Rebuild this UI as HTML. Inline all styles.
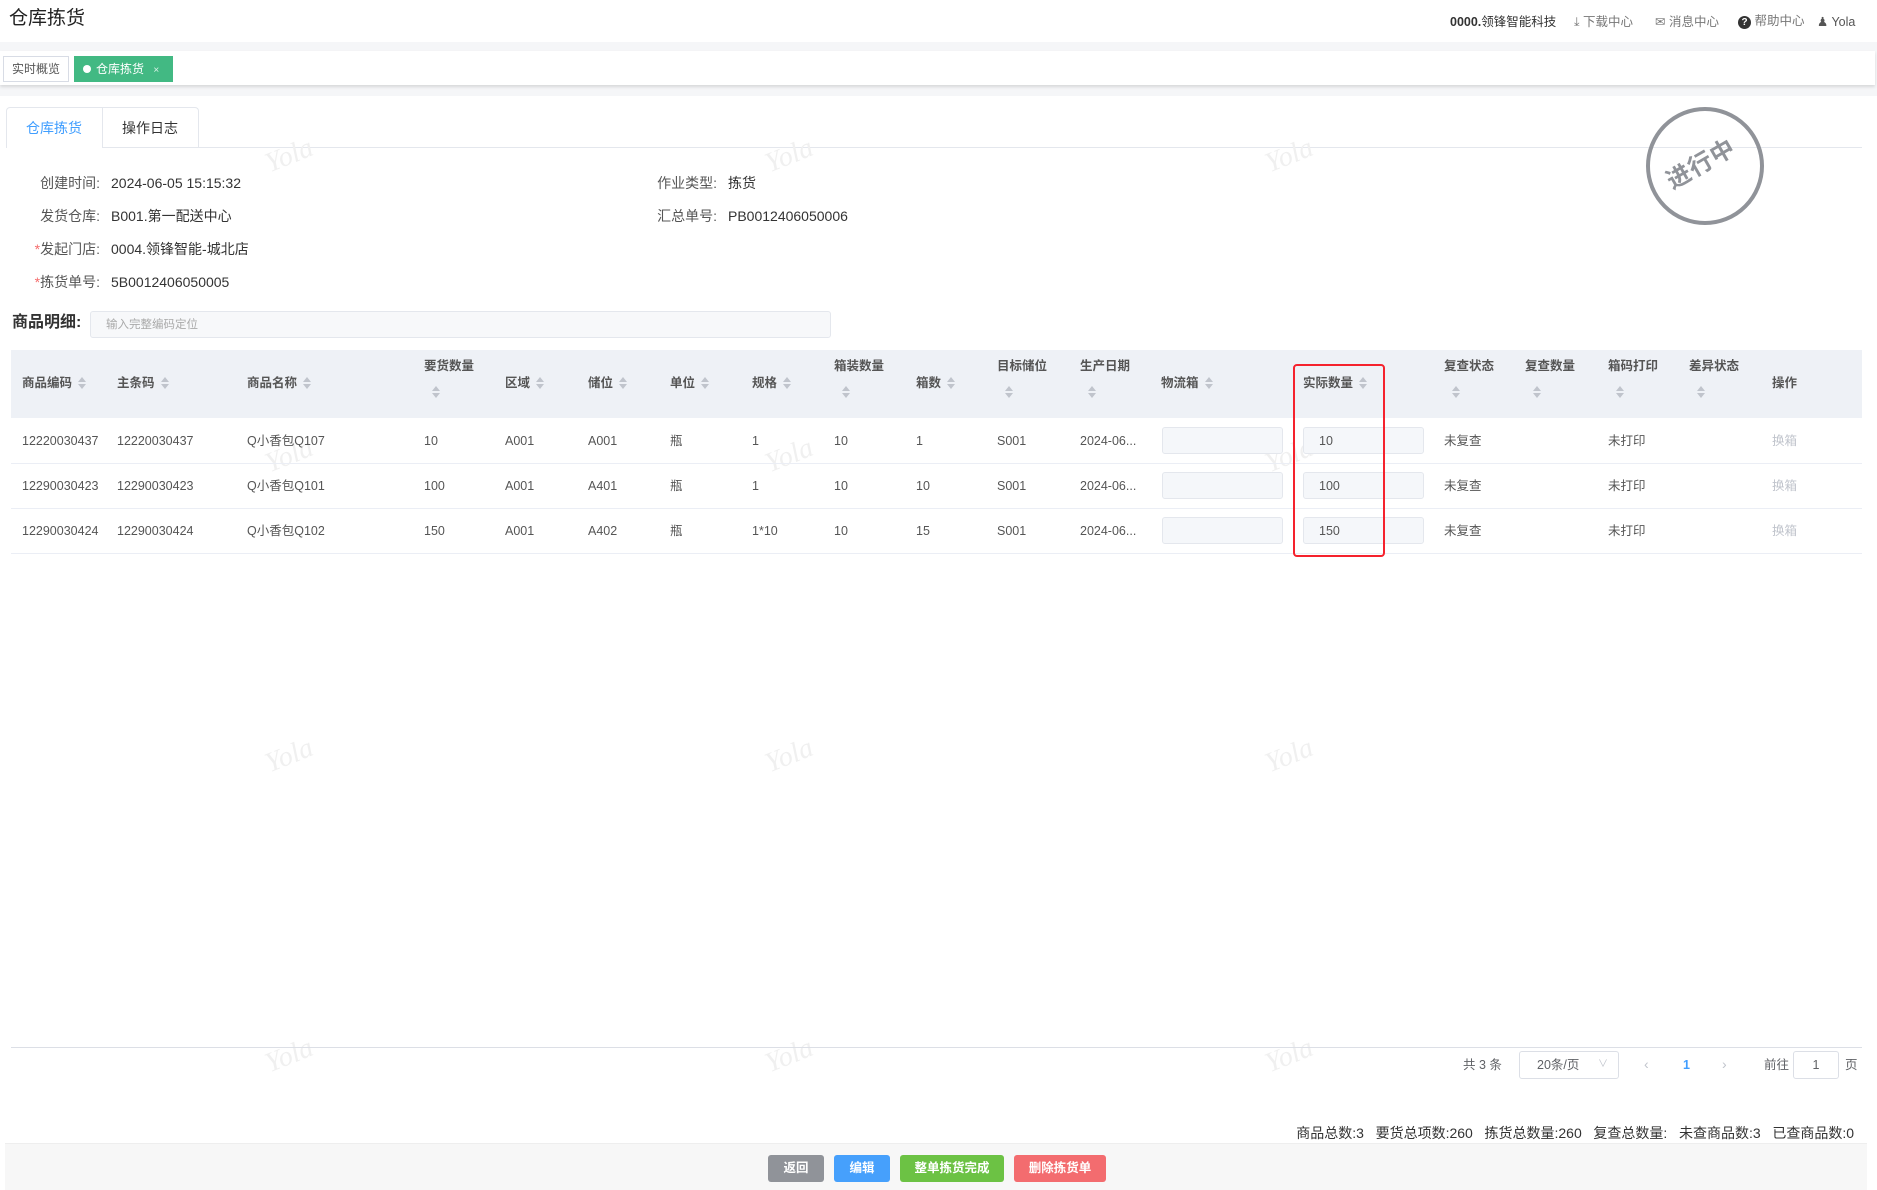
<!DOCTYPE html>
<html><head><meta charset="utf-8">
<style>
*{box-sizing:border-box;margin:0;padding:0}
body{width:1877px;height:1190px;position:relative;background:#fff;font-family:"Liberation Sans","Noto Sans CJK SC",sans-serif;color:#333;overflow:hidden;font-size:13px}
.a{position:absolute;white-space:nowrap;line-height:16px}
.s{display:inline-block;width:8px;height:12px;vertical-align:-2px;margin-left:6px;position:relative}
.s:before,.s:after{content:"";position:absolute;left:0;border-left:4px solid transparent;border-right:4px solid transparent}
.s:before{top:0;border-bottom:5px solid #c0c4cc}
.s:after{bottom:0;border-top:5px solid #c0c4cc}
.th{font-weight:bold;color:#555;font-size:12.5px}
.th2 .s{display:block;margin:12px 0 0 8px}
.td{color:#555;font-size:12.5px}
.inp{position:absolute;background:#f5f7fa;border:1px solid #e4e7ed;border-radius:3px}
.wm{position:absolute;color:#f0f0f0;font-family:"Liberation Serif",serif;font-style:italic;font-size:28px;transform:rotate(-22deg)}
.btn{position:absolute;top:1155px;height:27px;border-radius:3px;color:#fff;font-size:12.5px;text-align:center;line-height:27px;font-weight:bold}
.lbl{text-align:right;width:90px;color:#555;font-size:14px}
.val{color:#333;font-size:14px}
</style></head><body>
<div class="a" style="left:9px;top:8px;font-size:19px;line-height:22px;color:#222">仓库拣货</div>
<div class="a" style="left:1450px;top:14px;font-size:12.5px;font-weight:bold;color:#333">0000.<span style="font-weight:normal">领锋智能科技</span></div>
<div class="a" style="left:1574px;top:14px;font-size:12.5px;color:#777">⤓ 下载中心</div>
<div class="a" style="left:1655px;top:14px;font-size:12.5px;color:#777">✉ 消息中心</div>
<div class="a" style="left:1738px;top:13px;font-size:12.5px;color:#777"><span style="display:inline-block;width:13px;height:13px;border-radius:50%;background:#333;color:#fff;font-size:10px;text-align:center;line-height:13px;font-weight:bold;vertical-align:0">?</span> 帮助中心</div>
<div class="a" style="left:1817px;top:14px;font-size:12.5px;color:#555">&#9823; Yola</div>
<div class="a" style="left:0;top:42px;width:1877px;height:54px;background:#f5f6f8"></div>
<div class="a" style="left:0;top:51px;width:1875px;height:34px;background:#fff;box-shadow:0 2px 3px rgba(0,0,0,.12)"></div>
<div class="a" style="left:3px;top:56px;width:66px;height:26px;border:1px solid #d8dce5;font-size:12px;color:#555;line-height:24px;text-align:center">实时概览</div>
<div class="a" style="left:74px;top:56px;width:99px;height:26px;background:#42b983;color:#fff;font-size:12px;line-height:26px;padding-left:9px"><span style="display:inline-block;width:8px;height:8px;border-radius:50%;background:#fff;margin-right:5px;vertical-align:0"></span>仓库拣货 <span style="font-size:10px;margin-left:6px;opacity:.8">×</span></div>
<div class="a" style="left:6px;top:107px;width:193px;height:41px;border:1px solid #e4e7ed;border-bottom:none;border-radius:4px 4px 0 0"></div>
<div class="a" style="left:102px;top:107px;width:1px;height:41px;background:#e4e7ed"></div>
<div class="a" style="left:102px;top:147px;width:1760px;height:1px;background:#e4e7ed"></div>
<div class="a" style="left:26px;top:120px;font-size:14px;color:#409eff">仓库拣货</div>
<div class="a" style="left:122px;top:120px;font-size:14px;color:#333">操作日志</div>
<div class="wm" style="left:265px;top:140px">Yola</div><div class="wm" style="left:765px;top:140px">Yola</div><div class="wm" style="left:1265px;top:140px">Yola</div>
<div class="wm" style="left:265px;top:440px">Yola</div><div class="wm" style="left:765px;top:440px">Yola</div><div class="wm" style="left:1265px;top:440px">Yola</div>
<div class="wm" style="left:265px;top:740px">Yola</div><div class="wm" style="left:765px;top:740px">Yola</div><div class="wm" style="left:1265px;top:740px">Yola</div>
<div class="wm" style="left:265px;top:1040px">Yola</div><div class="wm" style="left:765px;top:1040px">Yola</div><div class="wm" style="left:1265px;top:1040px">Yola</div>
<div class="a lbl" style="left:10px;top:175px">创建时间:</div><div class="a val" style="left:111px;top:175px">2024-06-05 15:15:32</div>
<div class="a lbl" style="left:10px;top:208px">发货仓库:</div><div class="a val" style="left:111px;top:208px">B001.第一配送中心</div>
<div class="a lbl" style="left:10px;top:241px"><span style="color:#f56c6c">*</span>发起门店:</div><div class="a val" style="left:111px;top:241px">0004.领锋智能-城北店</div>
<div class="a lbl" style="left:10px;top:274px"><span style="color:#f56c6c">*</span>拣货单号:</div><div class="a val" style="left:111px;top:274px">5B0012406050005</div>
<div class="a lbl" style="left:627px;top:175px">作业类型:</div><div class="a val" style="left:728px;top:175px">拣货</div>
<div class="a lbl" style="left:627px;top:208px">汇总单号:</div><div class="a val" style="left:728px;top:208px">PB0012406050006</div>
<div class="a" style="left:1646px;top:107px;width:118px;height:118px;border:4px solid #909399;border-radius:50%"></div>
<div class="a" style="left:1664px;top:152px;font-size:24px;line-height:26px;font-weight:bold;color:#909399;transform:rotate(-30deg);letter-spacing:1px">进行中</div>
<div class="a" style="left:12px;top:314px;font-size:16px;line-height:18px;font-weight:bold;color:#333">商品明细:</div>
<div class="inp" style="left:90px;top:311px;width:741px;height:27px;background:#f7f8fa"></div>
<div class="a" style="left:106px;top:317px;font-size:11.5px;color:#aaa">输入完整编码定位</div>
<div class="a" style="left:11px;top:350px;width:1851px;height:68px;background:#eef1f6"></div>
<div class="a" style="left:11px;top:463px;width:1851px;height:1px;background:#ebeef5"></div>
<div class="a" style="left:11px;top:508px;width:1851px;height:1px;background:#ebeef5"></div>
<div class="a" style="left:11px;top:553px;width:1851px;height:1px;background:#ebeef5"></div>
<div class="a th" style="left:22px;top:375px">商品编码<span class="s"></span></div>
<div class="a th" style="left:117px;top:375px">主条码<span class="s"></span></div>
<div class="a th" style="left:247px;top:375px">商品名称<span class="s"></span></div>
<div class="a th" style="left:505px;top:375px">区域<span class="s"></span></div>
<div class="a th" style="left:588px;top:375px">储位<span class="s"></span></div>
<div class="a th" style="left:670px;top:375px">单位<span class="s"></span></div>
<div class="a th" style="left:752px;top:375px">规格<span class="s"></span></div>
<div class="a th" style="left:916px;top:375px">箱数<span class="s"></span></div>
<div class="a th" style="left:1161px;top:375px">物流箱<span class="s"></span></div>
<div class="a th" style="left:1303px;top:375px">实际数量<span class="s"></span></div>
<div class="a th" style="left:1772px;top:375px">操作</div>
<div class="a th th2" style="left:424px;top:358px">要货数量<span class="s"></span></div>
<div class="a th th2" style="left:834px;top:358px">箱装数量<span class="s"></span></div>
<div class="a th th2" style="left:997px;top:358px">目标储位<span class="s"></span></div>
<div class="a th th2" style="left:1080px;top:358px">生产日期<span class="s"></span></div>
<div class="a th th2" style="left:1444px;top:358px">复查状态<span class="s"></span></div>
<div class="a th th2" style="left:1525px;top:358px">复查数量<span class="s"></span></div>
<div class="a th th2" style="left:1608px;top:358px">箱码打印<span class="s"></span></div>
<div class="a th th2" style="left:1689px;top:358px">差异状态<span class="s"></span></div>

<div class="a td" style="left:22px;top:433px">12220030437</div><div class="a td" style="left:117px;top:433px">12220030437</div><div class="a td" style="left:247px;top:433px">Q小香包Q107</div><div class="a td" style="left:424px;top:433px">10</div><div class="a td" style="left:505px;top:433px">A001</div><div class="a td" style="left:588px;top:433px">A001</div><div class="a td" style="left:670px;top:433px">瓶</div><div class="a td" style="left:752px;top:433px">1</div><div class="a td" style="left:834px;top:433px">10</div><div class="a td" style="left:916px;top:433px">1</div><div class="a td" style="left:997px;top:433px">S001</div><div class="a td" style="left:1080px;top:433px">2024-06...</div>
<div class="inp" style="left:1162px;top:427px;width:121px;height:27px"></div><div class="inp" style="left:1303px;top:427px;width:121px;height:27px"></div><div class="a td" style="left:1319px;top:433px">10</div>
<div class="a td" style="left:1444px;top:433px">未复查</div><div class="a td" style="left:1608px;top:433px">未打印</div><div class="a td" style="left:1772px;top:433px;color:#c0c4cc">换箱</div>

<div class="a td" style="left:22px;top:478px">12290030423</div><div class="a td" style="left:117px;top:478px">12290030423</div><div class="a td" style="left:247px;top:478px">Q小香包Q101</div><div class="a td" style="left:424px;top:478px">100</div><div class="a td" style="left:505px;top:478px">A001</div><div class="a td" style="left:588px;top:478px">A401</div><div class="a td" style="left:670px;top:478px">瓶</div><div class="a td" style="left:752px;top:478px">1</div><div class="a td" style="left:834px;top:478px">10</div><div class="a td" style="left:916px;top:478px">10</div><div class="a td" style="left:997px;top:478px">S001</div><div class="a td" style="left:1080px;top:478px">2024-06...</div>
<div class="inp" style="left:1162px;top:472px;width:121px;height:27px"></div><div class="inp" style="left:1303px;top:472px;width:121px;height:27px"></div><div class="a td" style="left:1319px;top:478px">100</div>
<div class="a td" style="left:1444px;top:478px">未复查</div><div class="a td" style="left:1608px;top:478px">未打印</div><div class="a td" style="left:1772px;top:478px;color:#c0c4cc">换箱</div>

<div class="a td" style="left:22px;top:523px">12290030424</div><div class="a td" style="left:117px;top:523px">12290030424</div><div class="a td" style="left:247px;top:523px">Q小香包Q102</div><div class="a td" style="left:424px;top:523px">150</div><div class="a td" style="left:505px;top:523px">A001</div><div class="a td" style="left:588px;top:523px">A402</div><div class="a td" style="left:670px;top:523px">瓶</div><div class="a td" style="left:752px;top:523px">1*10</div><div class="a td" style="left:834px;top:523px">10</div><div class="a td" style="left:916px;top:523px">15</div><div class="a td" style="left:997px;top:523px">S001</div><div class="a td" style="left:1080px;top:523px">2024-06...</div>
<div class="inp" style="left:1162px;top:517px;width:121px;height:27px"></div><div class="inp" style="left:1303px;top:517px;width:121px;height:27px"></div><div class="a td" style="left:1319px;top:523px">150</div>
<div class="a td" style="left:1444px;top:523px">未复查</div><div class="a td" style="left:1608px;top:523px">未打印</div><div class="a td" style="left:1772px;top:523px;color:#c0c4cc">换箱</div>
<div class="a" style="left:1293px;top:364px;width:92px;height:193px;border:2.5px solid #f5222d;border-radius:4px"></div>
<div class="a" style="left:11px;top:1047px;width:1851px;height:1px;background:#dcdfe6"></div>
<div class="a" style="left:1463px;top:1057px;font-size:12.5px;color:#606266">共 3 条</div>
<div class="a" style="left:1519px;top:1051px;width:100px;height:28px;border:1px solid #dcdfe6;border-radius:3px;font-size:12.5px;color:#606266;line-height:26px;padding-left:17px">20条/页<span style="position:absolute;right:10px;color:#c0c4cc;font-size:10px">∨</span></div>
<div class="a" style="left:1644px;top:1056px;font-size:14px;color:#c0c4cc">‹</div>
<div class="a" style="left:1683px;top:1057px;font-size:12.5px;color:#409eff;font-weight:bold">1</div>
<div class="a" style="left:1722px;top:1056px;font-size:14px;color:#c0c4cc">›</div>
<div class="a" style="left:1764px;top:1057px;font-size:12.5px;color:#606266">前往</div>
<div class="a" style="left:1793px;top:1051px;width:46px;height:28px;border:1px solid #dcdfe6;border-radius:3px;font-size:12.5px;color:#606266;line-height:26px;text-align:center">1</div>
<div class="a" style="left:1845px;top:1057px;font-size:12.5px;color:#606266">页</div>
<div class="a" style="right:23px;top:1125px;font-size:14px;color:#333">商品总数:3&nbsp;&nbsp; 要货总项数:260&nbsp;&nbsp; 拣货总数量:260&nbsp;&nbsp; 复查总数量:&nbsp;&nbsp; 未查商品数:3&nbsp;&nbsp; 已查商品数:0</div>
<div class="a" style="left:5px;top:1143px;width:1862px;height:47px;background:#f7f7f7;border-top:1px solid #eee"></div>
<div class="btn" style="left:768px;width:56px;background:#909399">返回</div>
<div class="btn" style="left:834px;width:56px;background:#46a0fc">编辑</div>
<div class="btn" style="left:900px;width:104px;background:#6cc244">整单拣货完成</div>
<div class="btn" style="left:1014px;width:92px;background:#f36c6f">删除拣货单</div>
</body></html>
